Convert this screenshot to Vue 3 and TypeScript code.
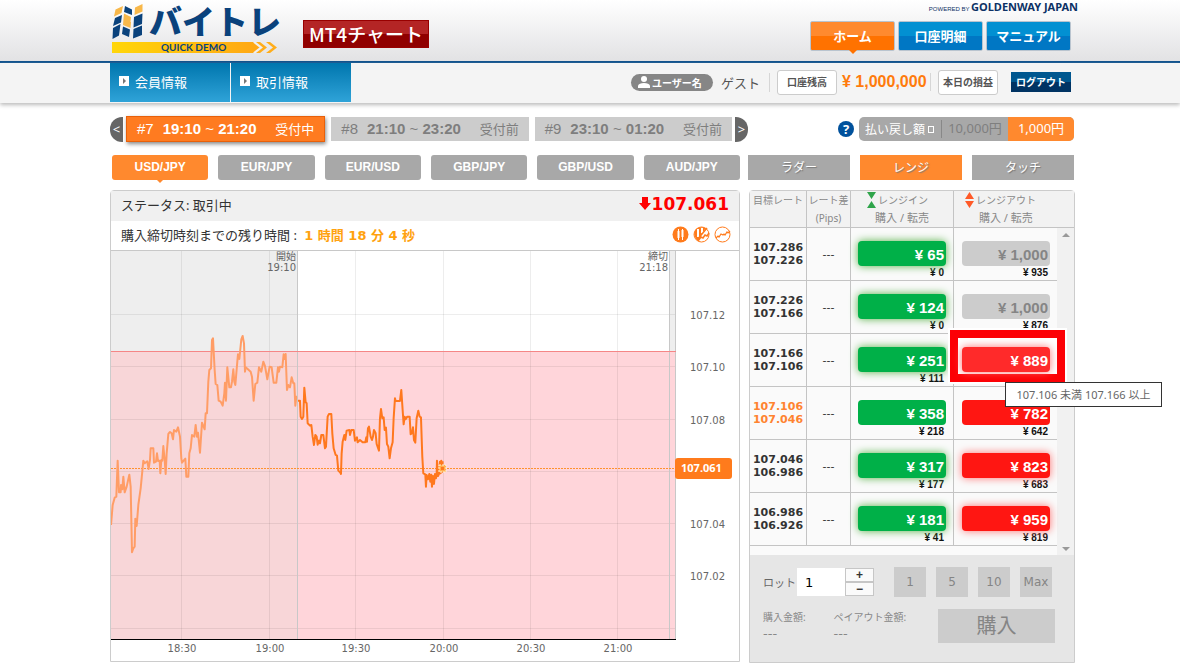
<script setup lang="ts">
import { ref } from 'vue'

interface Session { no: string; from: string; to: string; state: string; active: boolean }
interface RateRow {
  high: string
  low: string
  inBuy: string
  inSell: string
  outBuy: string
  outSell: string
  current?: boolean
  closed?: boolean
  picked?: boolean
}

const sessions: Session[] = [
  { no: '#7', from: '19:10', to: '21:20', state: '受付中', active: true },
  { no: '#8', from: '21:10', to: '23:20', state: '受付前', active: false },
  { no: '#9', from: '23:10', to: '01:20', state: '受付前', active: false },
]
const pairs = ['USD/JPY', 'EUR/JPY', 'EUR/USD', 'GBP/JPY', 'GBP/USD', 'AUD/JPY']
const modes = ['ラダー', 'レンジ', 'タッチ']
const lots = ['1', '5', '10', 'Max']
const lot = ref('1')

const rows: RateRow[] = [
  { high: '107.286', low: '107.226', inBuy: '65', inSell: '0', outBuy: '1,000', outSell: '935', closed: true },
  { high: '107.226', low: '107.166', inBuy: '124', inSell: '0', outBuy: '1,000', outSell: '876', closed: true },
  { high: '107.166', low: '107.106', inBuy: '251', inSell: '111', outBuy: '889', outSell: '', picked: true },
  { high: '107.106', low: '107.046', inBuy: '358', inSell: '218', outBuy: '782', outSell: '642', current: true },
  { high: '107.046', low: '106.986', inBuy: '317', inSell: '177', outBuy: '823', outSell: '683' },
  { high: '106.986', low: '106.926', inBuy: '181', inSell: '41', outBuy: '959', outSell: '819' },
]

const timeTicks = [
  { x: 70, label: '18:30' },
  { x: 158, label: '19:00' },
  { x: 244, label: '19:30' },
  { x: 332, label: '20:00' },
  { x: 419, label: '20:30' },
  { x: 506, label: '21:00' },
]
const rateTicks = [
  { y: 64, label: '107.12' },
  { y: 116, label: '107.10' },
  { y: 169, label: '107.08' },
  { y: 221, label: '' },
  { y: 273, label: '107.04' },
  { y: 325, label: '107.02' },
  { y: 378, label: '' },
]

// Series are stored at three units per chart pixel.
const beforeStart =
  '33,855 38,795 44,773 49,770 53,662 57,757 62,757 63,735 67,748 70,710 74,757 80,740 88,704 92,740 96,937 100,925 104,920 106,836 110,858 115,795 122,745 130,662 134,670 142,664 146,687 150,660 152,625 160,625 162,668 168,665 171,640 174,663 179,662 181,700 184,660 187,662 190,618 194,660 197,702 200,640 205,582 210,576 215,580 219,598 222,570 229,575 234,562 240,590 244,655 246,668 256,656 259,710 265,710 268,640 272,625 276,585 283,590 287,555 291,590 294,578 300,638 306,548 314,568 317,520 321,520 325,425 328,390 333,385 336,300 339,295 344,390 347,432 352,435 356,482 362,485 368,497 373,460 375,428 378,482 382,382 388,442 393,442 396,425 400,388 403,425 406,435 412,365 414,343 418,357 424,298 428,288 432,310 435,395 437,382 443,387 452,395 456,410 461,482 466,432 472,428 477,382 484,395 490,365 495,378 502,418 509,380 515,382 521,428 529,428 534,382 537,395 540,380 547,382 551,343 553,357 557,342 561,450 565,435 570,442 575,412 580,430 583,430 586,497 589,470 591,470'
const afterStart =
  '594,482 600,482 602,530 606,537 610,530 613,443 617,487 620,490 623,550 630,557 634,555 638,590 642,615 646,585 650,590 653,614 657,602 660,610 664,585 670,585 675,625 678,620 683,530 687,522 694,522 697,580 701,625 707,645 711,647 715,692 721,698 723,702 725,640 728,605 733,585 736,600 740,572 748,570 750,585 754,570 761,570 765,602 771,592 773,607 780,600 788,607 796,607 799,592 801,605 804,565 807,560 812,590 816,600 819,590 822,570 827,580 830,612 837,632 840,535 843,507 847,535 851,532 854,570 858,563 861,612 865,620 869,655 873,625 878,607 881,535 885,475 887,483 900,483 904,450 908,510 911,553 914,530 917,538 922,530 929,530 932,583 936,580 939,562 942,600 946,608 950,535 955,512 959,530 963,532 967,650 970,700 976,703 978,740 980,705 984,718 988,702 991,725 994,704 996,740 999,708 1002,732 1005,702 1008,715 1010,705 1011,662 1014,708 1018,700 1020,665 1022,700 1024,662 1027,695 1028,664'
</script>

<template>
  <div class="page">
    <header class="top">
      <div class="wrap top-in">
        <a class="logo" href="#" aria-label="バイトレ QUICK DEMO">
          <svg width="168" height="54" viewBox="0 0 168 54" aria-hidden="true">
            <defs>
              <linearGradient id="ribbon" x1="0" x2="1" y1="0" y2="0">
                <stop offset="0" stop-color="#ffd60a" />
                <stop offset="1" stop-color="#ffa614" />
              </linearGradient>
            </defs>
            <path
              fill="#f8b84a"
              d="M5.500 9.500L13 6l-1.500 7L4 16.500zM14 13.500l7 3.500-.5 5-7-3.500zM13.500 18.500l7.500 3.500-.5 6-7.500-3zM25 7.500L32.500 4v7.500l-8 3.500z"
            />
            <path
              fill="#0a427c"
              d="M5 18l7-3-1 7.500L3 26zM3 28l7.500-4L9 35.500 2.500 39zM15 6l7 3.500V15l-8-3zM13 26.500l7 3-1 7.500-7-3zM24 17l8.500-3.500L32 24l-8.500 3.500zM23.500 29l8.500-3.500V35l-9 3.500z"
            />
            <path d="M2 42H143l8 5.500-8 5.500H2z" fill="url(#ribbon)" />
            <path d="M144 42l7 5.500-7 5.500" fill="none" stroke="#efefef" stroke-width="2" />
            <path d="M146 42h4l7 5.500-7 5.500h-4l7-5.500zM156 42h4l7 5.500-7 5.500h-4l7-5.500z" fill="#ffad1a" />
            <text class="logo-name" x="39" y="34">バイトレ</text>
            <text class="logo-sub" x="51" y="51">QUICK DEMO</text>
          </svg>
        </a>
        <a class="mt4" href="#">MT4チャート</a>
        <div class="top-right">
          <p class="powered"><span>POWERED BY</span> <b>GOLDENWAY JAPAN</b></p>
          <nav class="nav">
            <a class="on" href="#">ホーム</a>
            <a href="#">口座明細</a>
            <a href="#">マニュアル</a>
          </nav>
        </div>
      </div>
    </header>

    <div class="sub">
      <div class="wrap sub-in">
        <nav class="menu">
          <a href="#"><i></i>会員情報</a>
          <a href="#"><i></i>取引情報</a>
        </nav>
        <div class="account">
          <span class="user">
            <svg width="12" height="12" viewBox="0 0 12 12" aria-hidden="true">
              <circle cx="6" cy="3" r="3" fill="#fff" />
              <path d="M0 12V9.500Q1 7 6 7t6 2.500V12z" fill="#fff" />
            </svg>
            ユーザー名
          </span>
          <span class="guest">ゲスト</span>
          <span class="chip wide">口座残高</span>
          <b class="balance">¥ 1,000,000</b>
          <span class="chip">本日の損益</span>
          <button class="logout" type="button">ログアウト</button>
        </div>
      </div>
    </div>

    <main class="wrap main">
      <div class="row-one">
        <div class="sessions">
          <button class="arrow prev" type="button" aria-label="前へ">&lt;</button>
          <button v-for="s in sessions" :key="s.no" type="button" class="session" :class="{ on: s.active }">
            <span>{{ s.no }}</span>
            <span class="hours"><b>{{ s.from }}</b> ~ <b>{{ s.to }}</b></span>
            <span class="state">{{ s.state }}</span>
          </button>
          <button class="arrow next" type="button" aria-label="次へ">&gt;</button>
        </div>
        <div class="payout">
          <button class="help" type="button">?</button>
          <div class="payout-pill">
            <span class="payout-label">払い戻し額<i></i></span>
            <button type="button">10,000円</button>
            <button type="button" class="on">1,000円</button>
          </div>
        </div>
      </div>

      <div class="row-two">
        <div class="pairs">
          <button v-for="(p, i) in pairs" :key="p" type="button" :class="{ on: i === 0 }">{{ p }}</button>
        </div>
        <div class="modes">
          <button v-for="(m, i) in modes" :key="m" type="button" :class="{ on: i === 1 }">{{ m }}</button>
        </div>
      </div>

      <div class="row-three">
        <section class="chart">
          <div class="status">
            <span>ステータス: 取引中</span>
            <b class="rate">
              <svg width="12" height="13" viewBox="0 0 12 13" aria-hidden="true">
                <path d="M3 0h6v6h3l-6 7-6-7h3z" fill="#f00" />
              </svg>107.061
            </b>
          </div>
          <div class="remain">
            <span>購入締切時刻までの残り時間 : <b>1 時間 18 分 4 秒</b></span>
            <span class="kinds">
              <button type="button" aria-label="ローソク足">
                <svg width="17" height="17" viewBox="0 0 17 17">
                  <circle cx="8.500" cy="8.500" r="8" fill="#ff7b1c" />
                  <path d="M6.500 3v11M10.500 3v11" stroke="#fff" stroke-width="1" />
                  <path d="M6.500 5v7M10.500 4v7" stroke="#fff" stroke-width="2" />
                </svg>
              </button>
              <button type="button" aria-label="ローソク足とライン">
                <svg width="17" height="17" viewBox="0 0 17 17">
                  <circle cx="8.500" cy="8.500" r="7.500" fill="#fff" stroke="#ff7b1c" />
                  <path d="M3 3Q7 0 13 2L4 14Q-1 9 3 3z" fill="#ff7b1c" />
                  <path d="M5 3v8M9 2v5" stroke="#fff" stroke-width="2" />
                  <path d="M4 14L14 2M5 15l3-4 2 1 2-3 2 1 2-3" fill="none" stroke="#ff7b1c" stroke-width="1.500" />
                </svg>
              </button>
              <button type="button" aria-label="ライン">
                <svg width="17" height="17" viewBox="0 0 17 17">
                  <circle cx="8.500" cy="8.500" r="7.500" fill="#fff" stroke="#ff7b1c" />
                  <path d="M2 12l2-2 1 1 2-3 2 1 1-1 1 1 2-3 1 1 2-2" fill="none" stroke="#ff7b1c" stroke-width="1.200" />
                </svg>
              </button>
            </span>
          </div>
          <svg class="plot" viewBox="0 0 628 411" role="img" aria-label="USD/JPY">
            <rect x="0" y="0" width="187" height="389" fill="#eee" />
            <rect x="558" y="0" width="6" height="389" fill="#eee" />
            <rect x="0" y="101" width="564" height="288" fill="#ffd5da" />
            <rect x="0" y="101" width="187" height="288" fill="#f8d6d8" />
            <g stroke="#000" stroke-opacity=".07" shape-rendering="crispEdges">
              <line v-for="t in timeTicks" :key="t.x" :x1="t.x + 0.5" :x2="t.x + 0.5" y1="0" y2="389" />
              <line v-for="r in rateTicks" :key="r.y" x1="0" x2="564" :y1="r.y + 0.5" :y2="r.y + 0.5" />
            </g>
            <g stroke="#c8c8c8" shape-rendering="crispEdges">
              <line x1="0" x2="628" y1="0.500" y2="0.500" />
              <line x1="186.500" x2="186.500" y1="0" y2="389" />
              <line x1="558.500" x2="558.500" y1="0" y2="389" />
              <line x1="564.500" x2="564.500" y1="0" y2="389" />
            </g>
            <line x1="0" x2="565" y1="101.500" y2="101.500" stroke="#f58686" shape-rendering="crispEdges" />
            <line x1="0" x2="565" y1="389.500" y2="389.500" stroke="#000" shape-rendering="crispEdges" />
            <line x1="0" x2="564" y1="218.500" y2="218.500" stroke="#ff922e" stroke-dasharray="2 1" shape-rendering="crispEdges" />
            <g transform="translate(-11 -10) scale(.3333)" fill="none" stroke-width="6" stroke-linejoin="round">
              <polyline :points="beforeStart" stroke="#ff9d66" />
              <polyline :points="afterStart" stroke="#ff781e" />
            </g>
            <rect x="328" y="215" width="7" height="7" fill="#ffb050" stroke="#fff4d8" stroke-dasharray="2 1" />
            <rect x="330" y="217" width="3" height="3" fill="#ff781e" />
            <g class="axis">
              <text v-for="t in timeTicks" :key="t.x" :x="t.x + 1" y="402" text-anchor="middle">{{ t.label }}</text>
              <text v-for="r in rateTicks" :key="r.y" x="579" :y="r.y + 5">{{ r.label }}</text>
              <text x="185" y="10" text-anchor="end">開始</text>
              <text x="185" y="21" text-anchor="end">19:10</text>
              <text x="557" y="10" text-anchor="end">締切</text>
              <text x="557" y="21" text-anchor="end">21:18</text>
            </g>
            <rect x="564" y="208" width="57" height="21" rx="3" fill="#ff7b1c" />
            <text class="tag" x="570" y="222">107.061</text>
          </svg>
        </section>

        <section class="order">
          <table>
            <colgroup>
              <col class="c-rate" /><col class="c-diff" /><col class="c-side" /><col class="c-side" /><col class="c-scroll" />
            </colgroup>
            <thead>
              <tr>
                <th scope="col">目標レート</th>
                <th scope="col">レート差<br />(Pips)</th>
                <th scope="col">
                  <span class="head"><svg width="9" height="16" viewBox="0 0 9 16" aria-hidden="true"><path d="M0 0h9L4.500 7zM0 16h9L4.500 9z" fill="#2fa44a" /></svg>レンジイン</span>
                  <span class="head-sub">購入 / 転売</span>
                </th>
                <th scope="col" colspan="2">
                  <span class="head"><svg width="9" height="16" viewBox="0 0 9 16" aria-hidden="true"><path d="M0 7h9L4.500 0zM0 9h9L4.500 16z" fill="#ff5a28" /></svg>レンジアウト</span>
                  <span class="head-sub">購入 / 転売</span>
                </th>
              </tr>
            </thead>
            <tbody>
              <tr v-for="(r, i) in rows" :key="r.high">
                <td class="target" :class="{ now: r.current }">{{ r.high }}<br />{{ r.low }}</td>
                <td class="diff">---</td>
                <td class="side">
                  <button type="button" class="buy in" :class="{ glow: !r.current }">¥ {{ r.inBuy }}</button>
                  <small>¥ {{ r.inSell }}</small>
                </td>
                <td class="side">
                  <div v-if="r.picked" class="marker"></div>
                  <button type="button" class="buy out" :class="{ glow: !r.current && !r.closed, closed: r.closed, picked: r.picked }" :disabled="r.closed">¥ {{ r.outBuy }}</button>
                  <small v-if="r.outSell">¥ {{ r.outSell }}</small>
                  <div v-if="r.picked" class="tip" role="tooltip">107.106 未満 107.166 以上</div>
                </td>
                <td v-if="i === 0" class="scroll" rowspan="7">
                  <div><i class="up"></i><i class="down"></i></div>
                </td>
              </tr>
              <tr class="rest"><td colspan="4"></td></tr>
            </tbody>
          </table>
          <form class="entry" @submit.prevent>
            <div class="lot-row">
              <label for="lot">ロット</label>
              <input id="lot" v-model="lot" type="text" />
              <span class="spin">
                <button type="button">+</button>
                <button type="button">−</button>
              </span>
              <span class="lots">
                <button v-for="l in lots" :key="l" type="button">{{ l }}</button>
              </span>
            </div>
            <div class="sum-row">
              <p>購入金額:<br /><span>---</span></p>
              <p>ペイアウト金額:<br /><span>---</span></p>
              <button type="submit">購入</button>
            </div>
          </form>
        </section>
      </div>
    </main>
  </div>
</template>

<style>
body {
  background: #fff;
}
</style>

<style scoped>
.page {
  font-family: "Noto Sans", "Noto Sans CJK JP", sans-serif;
  font-size: 13px;
  color: #333;
  overflow: hidden;
}
.page * {
  box-sizing: border-box;
}
button {
  border: 0;
  padding: 0;
  margin: 0;
  font-family: inherit;
  cursor: pointer;
}
a {
  text-decoration: none;
}
p {
  margin: 0;
}
.wrap {
  max-width: 976px;
  margin: 0 auto;
  padding-left: 8px;
}
.top {
  background: linear-gradient(#fff, #e2e2e4);
  border-bottom: 2px solid #0b4f8c;
}
.top-in {
  display: flex;
  align-items: flex-start;
  height: 61px;
}
.logo {
  display: block;
  height: 54px;
}
.logo svg {
  display: block;
  overflow: visible;
}
.logo-name {
  font: 900 33px "Noto Sans CJK JP", sans-serif;
  fill: #0a427c;
}
.logo-sub {
  font: 700 10px Lato, sans-serif;
  fill: #0a427c;
}
.mt4 {
  margin: 20px 0 0 25px;
  width: 126px;
  height: 28px;
  line-height: 26px;
  text-align: center;
  color: #fff;
  font-size: 19px;
  font-weight: 500;
  font-family: "Noto Sans CJK JP", sans-serif;
  border: 1px solid #900;
  background: linear-gradient(#b42525 50%, #900000 50%);
}
.top-right {
  margin-left: auto;
}
.powered {
  height: 21px;
  line-height: 14px;
  text-align: right;
  color: #0c3165;
  font-family: "Liberation Sans", sans-serif;
  font-size: 6px;
  white-space: nowrap;
}
.powered b {
  font-family: "Noto Sans", sans-serif;
  font-size: 11px;
}
.nav {
  display: flex;
  gap: 3px;
  padding-right: 7px;
  justify-content: flex-end;
}
.nav a {
  position: relative;
  width: 85px;
  height: 30px;
  line-height: 28px;
  text-align: center;
  color: #fff;
  font-size: 13px;
  font-weight: 700;
  border: 1px solid #b9c4cf;
  border-radius: 2px;
  background: linear-gradient(#0290d2 50%, #0077c4 50%);
}
.nav .on {
  background: linear-gradient(#ff8a2e 50%, #ff7200 50%);
}
.nav .on::after {
  content: "";
  position: absolute;
  left: 38px;
  top: 28px;
  border: 4px solid transparent;
  border-top-color: #ff7200;
  border-bottom: 0;
}
.sub {
  background: #f4f4f4;
  box-shadow: 0 2px 4px #bbb;
}
.sub-in {
  display: flex;
  justify-content: space-between;
  height: 40px;
}
.menu {
  display: flex;
  gap: 1px;
}
.menu a {
  display: flex;
  align-items: center;
  width: 120px;
  height: 39px;
  padding: 0 0 3px 9px;
  color: #fff;
  font-size: 13px;
  background: linear-gradient(#0076ae, #2fa3d8);
}
.menu i {
  position: relative;
  width: 10px;
  height: 10px;
  margin-right: 6px;
  background: #fff;
}
.menu i::after {
  content: "";
  position: absolute;
  left: 4px;
  top: 2px;
  border: 3px solid transparent;
  border-left-color: #777;
  border-right: 0;
}
.account {
  display: flex;
  align-items: center;
  padding: 0 7px 2px 0;
  font-family: "Liberation Sans", "Noto Sans CJK JP", sans-serif;
  white-space: nowrap;
}
.user {
  display: flex;
  align-items: center;
  gap: 2px;
  width: 82px;
  height: 17px;
  padding-left: 7px;
  border-radius: 9px;
  color: #fff;
  font-size: 10px;
  font-weight: 700;
  background: #868686;
}
.guest {
  width: 57px;
  padding-left: 8px;
  font-size: 13px;
  color: #555;
  border-right: 1px solid #d6d6d6;
}
.chip {
  width: 60px;
  height: 25px;
  line-height: 23px;
  margin-left: 7px;
  text-align: center;
  font-size: 10px;
  font-weight: 700;
  color: #555;
  background: #fff;
  border: 1px solid #ccc;
  border-radius: 3px;
}
.balance {
  width: 94px;
  padding-left: 5px;
  font-size: 16px;
  color: #ff7b0c;
  border-right: 1px solid #d6d6d6;
}
.logout {
  width: 60px;
  height: 20px;
  margin-left: 13px;
  padding-bottom: 2px;
  color: #fff;
  font-size: 10px;
  font-weight: 700;
  background: linear-gradient(#00578f 50%, #003363 50%);
}
.main {
  padding-right: 3px;
}
.row-one {
  display: flex;
  justify-content: space-between;
  align-items: center;
  height: 26px;
  margin-top: 13px;
  padding-right: 1px;
}
.sessions {
  display: flex;
  align-items: center;
  width: 638px;
}
.session {
  display: flex;
  align-items: center;
  flex: 1;
  height: 24px;
  margin-right: 6px;
  padding: 0 10px 2px;
  color: #7e7e7e;
  background: #ccc;
  font-family: "Liberation Sans", "Noto Sans CJK JP", sans-serif;
  font-size: 15px;
  white-space: nowrap;
}
.session.on {
  height: 26px;
  color: #fff;
  background: #ff7b20;
  border: 1px solid #e8600a;
  box-shadow: 1px 2px 4px #888;
}
.hours {
  margin-left: 9px;
}
.state {
  margin-left: auto;
  font-size: 13px;
}
.arrow {
  width: 13px;
  height: 25px;
  color: #fff;
  background: #666;
  font-size: 13px;
}
.prev {
  margin-right: 3px;
  border-radius: 12px 0 0 12px;
}
.next {
  margin-left: -3px;
  border-radius: 0 12px 12px 0;
}
.payout {
  display: flex;
  align-items: center;
  gap: 5px;
}
.help {
  width: 16px;
  height: 16px;
  line-height: 16px;
  border-radius: 8px;
  color: #fff;
  background: #00519c;
  font-size: 13px;
  font-weight: 700;
}
.payout-pill {
  display: flex;
  align-items: center;
  width: 215px;
  height: 24px;
  overflow: hidden;
  border-radius: 5px;
  background: #a8a8a8;
  color: #fff;
}
.payout-label {
  display: flex;
  align-items: center;
  width: 83px;
  height: 18px;
  padding-left: 6px;
  font-size: 12px;
  border-right: 1px solid #888;
}
.payout-label i {
  width: 6px;
  height: 7px;
  margin-left: 3px;
  border: 1px solid #fff;
}
.payout-pill button {
  flex: 1;
  height: 24px;
  padding-bottom: 3px;
  font-size: 13px;
  color: #7f7f7f;
  background: #a8a8a8;
}
.payout-pill .on {
  color: #fff;
  background: #ff892e;
}
.row-two {
  display: grid;
  grid-template-columns: 630fr 326fr;
  gap: 8px;
  margin-top: 13px;
  padding-right: 1px;
}
.pairs {
  display: grid;
  grid-template-columns: repeat(6, 1fr);
  gap: 10px;
  padding-left: 2px;
}
.modes {
  display: grid;
  grid-template-columns: repeat(3, 1fr);
  gap: 10px;
}
.row-two button {
  position: relative;
  height: 25px;
  padding-bottom: 2px;
  color: #fff;
  background: #a8a8a8;
}
.pairs button {
  font: 700 12px "Liberation Sans", sans-serif;
  border-radius: 3px;
}
.modes button {
  font-size: 12px;
  text-shadow: 1px 1px 1px #777;
}
.row-two .on {
  background: #ff892e;
}
.pairs .on::after {
  content: "";
  position: absolute;
  left: 50%;
  top: 25px;
  margin-left: -3px;
  border: 3px solid transparent;
  border-top-color: #ff892e;
  border-bottom: 0;
}
.row-three {
  display: grid;
  grid-template-columns: 1fr 326px;
  gap: 9px;
  align-items: start;
  margin-top: 10px;
}
.chart {
  border: 1px solid #ccc;
  border-radius: 4px 4px 0 0;
}
.status,
.remain {
  display: flex;
  align-items: center;
  justify-content: space-between;
  height: 30px;
  padding: 0 8px 4px 10px;
}
.status {
  padding-right: 10px;
  background: #f0f0f0;
}
.rate {
  font: 700 17px "DejaVu Sans", sans-serif;
  color: #f00;
}
.rate svg {
  margin-right: 1px;
}
.remain {
  height: 29px;
  padding-bottom: 3px;
}
.remain b {
  margin-left: 4px;
  color: #ffa20f;
  font-family: "DejaVu Sans", "Noto Sans CJK JP", sans-serif;
}
.kinds {
  display: flex;
  gap: 4px;
}
.kinds button {
  width: 17px;
  height: 17px;
  background: none;
}
.kinds svg {
  display: block;
}
.plot {
  display: block;
  width: 100%;
}
.axis {
  font: 10px "DejaVu Sans", "Noto Sans CJK JP", sans-serif;
  fill: #666;
}
.tag {
  font: 700 11px "Noto Sans", sans-serif;
  fill: #fff;
}
.order {
  border: 1px solid #ccc;
  border-radius: 4px 4px 0 0;
  background: #fafafa;
}
table {
  width: 100%;
  table-layout: fixed;
  border-collapse: separate;
  border-spacing: 0;
}
.c-rate { width: 57px; }
.c-diff { width: 44px; }
.c-side { width: 103px; }
.c-scroll { width: 17px; }
th,
td {
  padding: 0;
  border-right: 1px solid #c4c4c4;
  border-bottom: 1px solid #c4c4c4;
}
th {
  height: 37px;
  vertical-align: top;
  background: #f2f2f2;
  color: #888;
  font-size: 10px;
  font-weight: 400;
  line-height: 18px;
  white-space: nowrap;
}
th:last-child {
  border-right: 0;
  text-align: left;
}
th:last-child .head {
  padding-left: 11px;
}
th:last-child .head-sub {
  padding-left: 25px;
}
.head {
  display: flex;
  align-items: center;
  gap: 2px;
  height: 18px;
  padding-left: 16px;
}
.head-sub {
  display: block;
  font-size: 11px;
}
td {
  height: 53px;
}
.target {
  text-align: center;
  font: 700 11px/13px "DejaVu Sans", sans-serif;
}
.now {
  color: #ff8330;
}
.diff {
  text-align: center;
  font: 11px "DejaVu Sans", sans-serif;
}
.side {
  position: relative;
  vertical-align: top;
  padding: 13px 7px 0;
  text-align: right;
}
.side + .side {
  padding-left: 8px;
  border-right: 0;
}
.buy {
  position: relative;
  display: block;
  width: 100%;
  height: 25px;
  padding: 1px 2px 0 0;
  border-radius: 4px;
  color: #fff;
  text-align: right;
  font: 700 15px "Liberation Sans", sans-serif;
}
.in { background: #00b048; }
.out { background: #ff1612; }
.in.glow { box-shadow: 0 0 8px #55b045; }
.out.glow { box-shadow: 0 0 8px #ff7070; }
.out.picked {
  z-index: 2;
  background: #ff2a2a;
}
.out.closed {
  color: #858585;
  background: #ccc;
}
small {
  display: block;
  margin-top: 1px;
  padding-right: 2px;
  line-height: 12px;
  color: #111;
  font-family: "Liberation Sans", sans-serif;
  font-size: 10px;
  font-weight: 700;
}
.marker {
  position: absolute;
  z-index: 1;
  left: -4px;
  top: -4px;
  width: 115px;
  height: 52px;
  border: 8px solid #fc0005;
  background: #fff;
  box-shadow: 0 0 0 2px #fff;
}
.tip {
  position: absolute;
  z-index: 3;
  left: 51px;
  top: 48px;
  width: 157px;
  height: 25px;
  line-height: 23px;
  text-align: center;
  white-space: nowrap;
  font-size: 11px;
  color: #666;
  background: #fff;
  border: 1px solid #333;
}
.scroll {
  padding: 0;
  height: auto;
  border: 0;
  background: #f1f1f1;
}
.scroll div {
  display: flex;
  flex-direction: column;
  justify-content: space-between;
  align-items: center;
  height: 318px;
}
.scroll i {
  border: 4px solid transparent;
}
.scroll .up {
  border-top: 0;
  border-bottom-color: #999;
}
.scroll .down {
  border-bottom: 0;
  border-top-color: #999;
}
.rest td {
  height: 9px;
  border: 0;
}
.entry {
  height: 107px;
  padding: 12px 19px 0 13px;
  background: #e6e6e6;
}
.lot-row {
  display: flex;
  align-items: center;
  height: 30px;
}
.lot-row label {
  width: 34px;
  font-size: 11px;
  color: #666;
}
.lot-row input {
  width: 48px;
  height: 28px;
  padding: 0 8px;
  border: 0;
  background: #fff;
  color: #000;
  font: 13px "DejaVu Sans", sans-serif;
}
.spin {
  display: grid;
  width: 29px;
}
.spin button {
  height: 14px;
  line-height: 12px;
  border: 1px solid #c6c6c6;
  background: #fafafa;
  color: #333;
  font-family: "Liberation Sans", sans-serif;
  font-size: 12px;
  font-weight: 700;
}
.lots {
  display: flex;
  gap: 10px;
  margin-left: auto;
  margin-right: 3px;
}
.lots button {
  width: 32px;
  height: 30px;
  color: #858585;
  background: #ccc;
  font: 12px "DejaVu Sans", sans-serif;
}
.sum-row {
  display: flex;
  justify-content: space-between;
  margin-top: 12px;
}
.sum-row p {
  width: 70px;
  color: #888;
  font-size: 10px;
  line-height: 17px;
  white-space: nowrap;
}
.sum-row p + p {
  width: 104px;
}
.sum-row span {
  font: 13px "DejaVu Sans", sans-serif;
}
.sum-row button {
  width: 117px;
  height: 34px;
  padding-bottom: 3px;
  color: #858585;
  background: #ccc;
  font-size: 20px;
}
</style>
